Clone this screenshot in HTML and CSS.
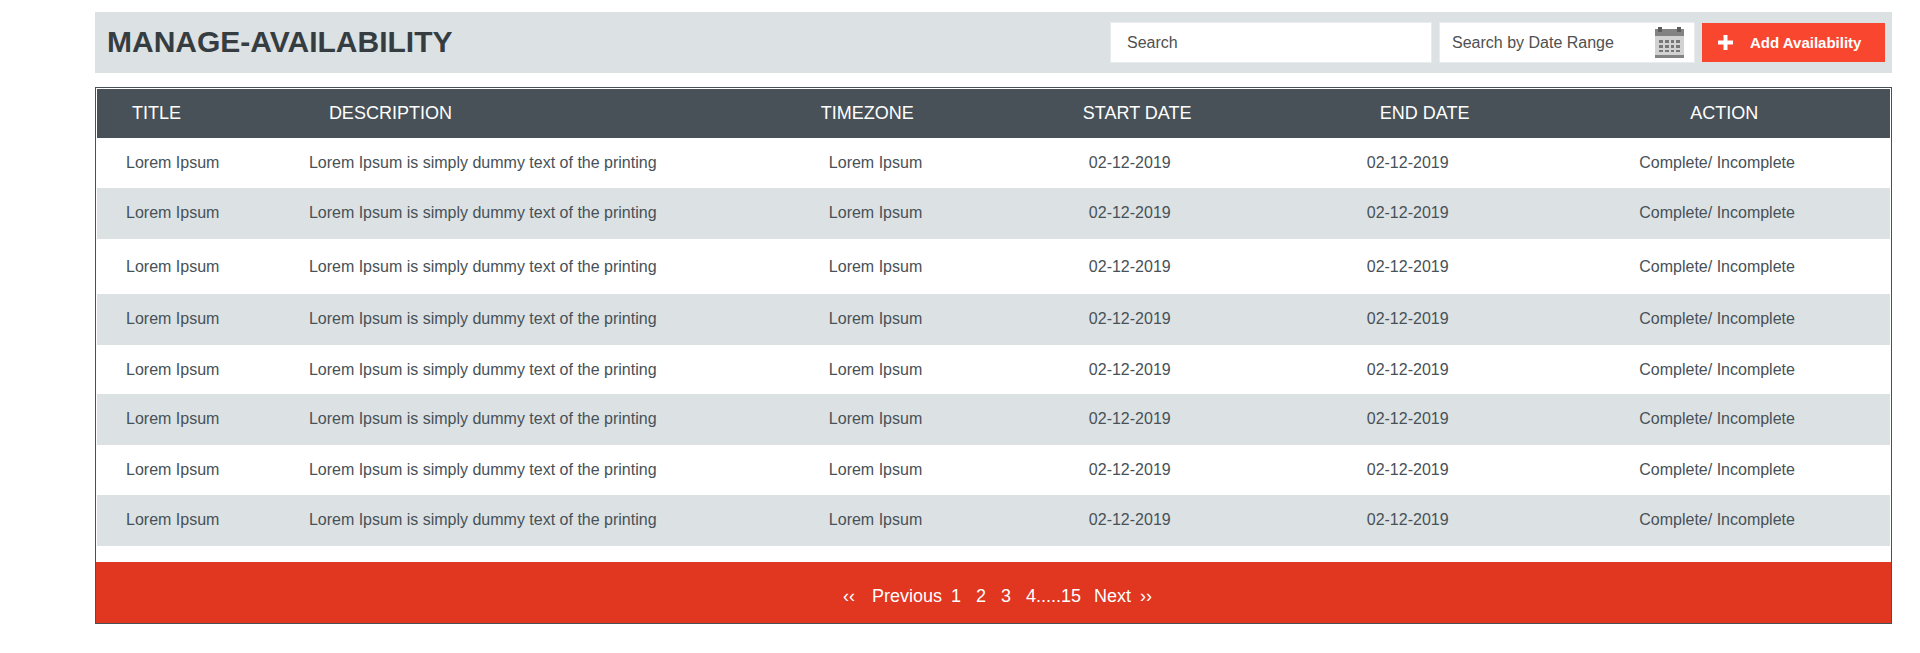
FILE: index.html
```html
<!DOCTYPE html>
<html lang="en">
<head>
<meta charset="utf-8">
<title>Manage Availability</title>
<link rel="stylesheet" href="styles.css">
</head>
<body>
<main class="page">
  <header class="toolbar">
    <h1 class="toolbar-title">MANAGE-AVAILABILITY</h1>
    <div class="toolbar-controls">
      <input class="field search" type="text" placeholder="Search" aria-label="Search">
      <label class="field range">
        <input class="range-input" type="text" placeholder="Search by Date Range" aria-label="Search by Date Range">
        <svg class="calendar" viewBox="0 0 29 31" aria-hidden="true">
          <rect y="2" width="29" height="29" fill="#d2d2d2"/>
          <rect y="2" width="29" height="7" fill="#838383"/>
          <rect y="28" width="29" height="3" fill="#838383"/>
          <path d="M3 0h4v5H3zM22 0h4v5h-4z" fill="#5b5b5b"/>
          <path d="M4 13h4v3H4zM10 13h4v3h-4zM16 13h3v3h-3zM21 13h4v3h-4zM4 18h4v3H4zM10 18h4v3h-4zM16 18h3v3h-3zM21 18h4v3h-4zM4 23h4v2H4zM10 23h4v2h-4zM16 23h3v2h-3zM21 23h4v2h-4z" fill="#777"/>
        </svg>
      </label>
      <button class="add" type="button">
        <svg class="plus" viewBox="0 0 15 15" aria-hidden="true"><path d="M5.5 0h4v5.500H15v4H9.500V15h-4V9.500H0v-4h5.500z" fill="#fff"/></svg>
        Add Availability
      </button>
    </div>
  </header>

  <section class="panel">
    <table class="grid">
      <colgroup><col class="c-title"><col class="c-desc"><col class="c-zone"><col class="c-start"><col class="c-end"><col></colgroup>
      <thead>
        <tr><th class="h-title">TITLE</th><th class="h-desc">DESCRIPTION</th><th class="h-zone">TIMEZONE</th><th class="h-start">START DATE</th><th class="h-end">END DATE</th><th class="h-action">ACTION</th></tr>
      </thead>
      <tbody>
        <tr><td>Lorem Ipsum</td><td>Lorem Ipsum is simply dummy text of the printing</td><td>Lorem Ipsum</td><td>02-12-2019</td><td>02-12-2019</td><td>Complete/ Incomplete</td></tr>
        <tr><td>Lorem Ipsum</td><td>Lorem Ipsum is simply dummy text of the printing</td><td>Lorem Ipsum</td><td>02-12-2019</td><td>02-12-2019</td><td>Complete/ Incomplete</td></tr>
        <tr class="tall"><td>Lorem Ipsum</td><td>Lorem Ipsum is simply dummy text of the printing</td><td>Lorem Ipsum</td><td>02-12-2019</td><td>02-12-2019</td><td>Complete/ Incomplete</td></tr>
        <tr><td>Lorem Ipsum</td><td>Lorem Ipsum is simply dummy text of the printing</td><td>Lorem Ipsum</td><td>02-12-2019</td><td>02-12-2019</td><td>Complete/ Incomplete</td></tr>
        <tr class="short"><td>Lorem Ipsum</td><td>Lorem Ipsum is simply dummy text of the printing</td><td>Lorem Ipsum</td><td>02-12-2019</td><td>02-12-2019</td><td>Complete/ Incomplete</td></tr>
        <tr><td>Lorem Ipsum</td><td>Lorem Ipsum is simply dummy text of the printing</td><td>Lorem Ipsum</td><td>02-12-2019</td><td>02-12-2019</td><td>Complete/ Incomplete</td></tr>
        <tr><td>Lorem Ipsum</td><td>Lorem Ipsum is simply dummy text of the printing</td><td>Lorem Ipsum</td><td>02-12-2019</td><td>02-12-2019</td><td>Complete/ Incomplete</td></tr>
        <tr><td>Lorem Ipsum</td><td>Lorem Ipsum is simply dummy text of the printing</td><td>Lorem Ipsum</td><td>02-12-2019</td><td>02-12-2019</td><td>Complete/ Incomplete</td></tr>
      </tbody>
    </table>
    <nav class="pager" aria-label="Pages">
      <a href="#" aria-label="First page">‹‹</a>
      <a class="prev" href="#">Previous</a>
      <div class="numbers">
        <a href="#">1</a>
        <a href="#">2</a>
        <a href="#">3</a>
        <span><a href="#">4</a>.....<a href="#">15</a></span>
      </div>
      <a class="next" href="#">Next</a>
      <a href="#" aria-label="Last page">››</a>
    </nav>
  </section>
</main>
</body>
</html>
```
FILE: styles.css
```css
* { box-sizing: border-box; }

body {
  margin: 0;
  background: #fff;
  color: #475157;
  font: 16px/20px "Liberation Sans", Arial, sans-serif;
}

.page { padding: 12px 28px 28px 95px; }

.toolbar {
  display: flex;
  align-items: center;
  justify-content: space-between;
  margin-bottom: 14px;
  padding: 10px 7px 10px 12px;
  background: #dce1e4;
}

.toolbar-title {
  margin: 0;
  padding-bottom: 2px;
  color: #363d41;
  font-size: 30px;
  line-height: 36px;
}

.toolbar-controls {
  display: flex;
  gap: 7px;
}

.field {
  height: 41px;
  border: 1px solid #e8ecee;
  background: #fff;
}

.field, .range-input {
  color: #505050;
  font: inherit;
}

.field::placeholder, .range-input::placeholder {
  color: #505050;
  opacity: 1;
}

.search {
  width: 322px;
  padding: 0 16px;
}

.range {
  display: flex;
  align-items: center;
  justify-content: space-between;
  width: 256px;
  padding: 0 10px 0 12px;
}

.range-input {
  width: 180px;
  padding: 0;
  border: 0;
  background: none;
}

.calendar { width: 29px; height: 31px; }

.add {
  display: flex;
  align-items: center;
  gap: 17px;
  width: 183px;
  height: 39px;
  margin-top: 1px;
  padding: 0 16px;
  border: 0;
  background: #f9472f;
  color: #fff;
  font: bold 15px/20px "Liberation Sans", Arial, sans-serif;
  white-space: nowrap;
}

.plus { width: 15px; height: 15px; }

.panel { border: 1px solid #475157; }

.grid {
  width: calc(100% - 2px);
  margin: 1px 1px 16px;
  border-collapse: separate;
  border-spacing: 0;
  table-layout: fixed;
}

.c-title { width: 10.2%; }
.c-desc { width: 29%; }
.c-zone { width: 14.5%; }
.c-start { width: 15.5%; }
.c-end { width: 15.2%; }

.grid th {
  height: 49px;
  padding: 0 0 2px;
  background: #475157;
  color: #fff;
  font-size: 18px;
  font-weight: normal;
  text-align: left;
}

.grid .h-title { padding-left: 35px; }
.grid .h-desc { padding-left: 49px; }
.grid .h-zone { padding-left: 21px; }
.grid .h-start { padding-left: 23px; }
.grid .h-end { padding-left: 42px; }
.grid .h-action { padding-left: 80px; }

.grid td {
  height: 50px;
  padding: 0 0 0 29px;
}

.grid tr:nth-child(even) td {
  height: 51px;
  padding-bottom: 2px;
  background: #dce1e4;
}

.grid .tall td { height: 55px; }
.grid .short td { height: 49px; }

.pager {
  display: flex;
  justify-content: center;
  gap: 9px;
  padding: 24px 0 17px 8px;
  background: #e13620;
  color: #fff;
  font-size: 18px;
}

.pager a {
  color: inherit;
  text-decoration: none;
}

.numbers {
  display: flex;
  gap: 15px;
}

.prev { padding-left: 8px; }
.next { padding-left: 4px; }
```
